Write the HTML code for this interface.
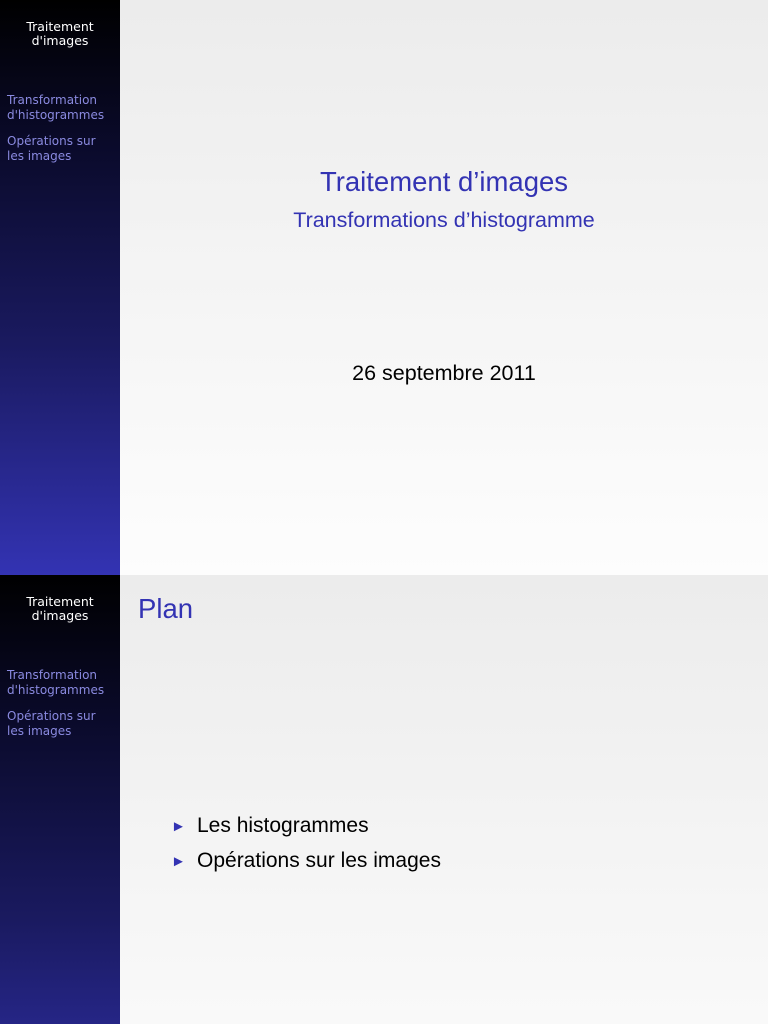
<!DOCTYPE html>
<html><head><meta charset="utf-8"><style>
*{margin:0;padding:0;box-sizing:border-box}
html,body{width:768px;height:1024px;overflow:hidden}
body{font-family:"DejaVu Sans","Liberation Sans",sans-serif;background:#fff;position:relative}
.s{position:absolute;left:0;width:768px}
.sb{position:absolute;left:0;top:0;width:120px;height:575px;background:linear-gradient(#000 0%,#0a0a2a 25%,#1a1a60 60%,#3333b3 100%)}
.bg{position:absolute;left:120px;top:0;width:648px;height:575px;background:linear-gradient(#ececec,#fdfdfd)}
.t{position:absolute;left:0;width:120px;text-align:center;color:#fff;font-size:12.5px;line-height:14px}
.n{position:absolute;left:7px;color:#8a8ae0;font-size:12px;line-height:15px}
.x{position:absolute;color:#3333b3;font-family:"Liberation Sans",sans-serif;white-space:nowrap}
</style></head><body>
<div class="s" style="top:0;height:575px">
<div class="sb"></div><div class="bg"></div>
<div class="t" style="top:20px">Traitement<br>d'images</div>
<div class="n" style="top:93px">Transformation<br>d'histogrammes</div>
<div class="n" style="top:134px">Opérations sur<br>les images</div>
<div class="x" style="left:120px;width:648px;text-align:center;top:166px;font-size:27.5px">Traitement d’images</div>
<div class="x" style="left:120px;width:648px;text-align:center;top:208px;font-size:21.5px">Transformations d’histogramme</div>
<div class="x" style="left:120px;width:648px;text-align:center;top:361px;font-size:21.5px;color:#000">26 septembre 2011</div>
</div>
<div class="s" style="top:575px;height:449px;overflow:hidden">
<div class="sb"></div><div class="bg"></div>
<div class="t" style="top:20px">Traitement<br>d'images</div>
<div class="n" style="top:93px">Transformation<br>d'histogrammes</div>
<div class="n" style="top:134px">Opérations sur<br>les images</div>
<div class="x" style="left:138px;top:18px;font-size:27.5px">Plan</div>
<div class="x" style="left:171px;top:243px;font-size:15px">&#9658;</div>
<div class="x" style="left:197px;top:239px;font-size:21px;color:#000">Les histogrammes</div>
<div class="x" style="left:171px;top:278px;font-size:15px">&#9658;</div>
<div class="x" style="left:197px;top:274px;font-size:21px;color:#000">Opérations sur les images</div>
</div>
</body></html>
